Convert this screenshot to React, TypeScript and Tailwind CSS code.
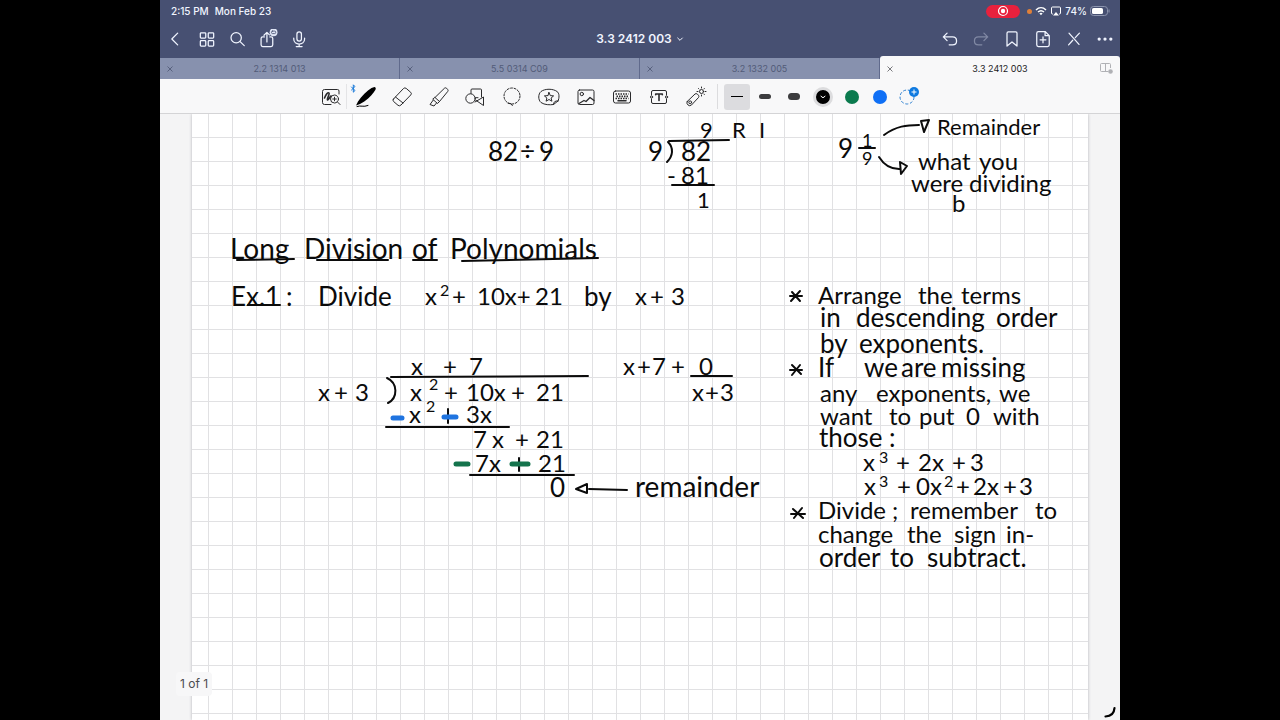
import type { ReactNode } from 'react';

type Word = [number, string];
type Line = { y: number; size: number; words: Word[] };

const INK = '#0b0b0b';

const tabs = [
  { title: '2.2 1314 013', active: false },
  { title: '5.5 0314 C09', active: false },
  { title: '3.2 1332 005', active: false },
  { title: '3.3 2412 003', active: true },
];

// Baseline, size and the start of every word on the sheet
const lines: Line[] = [
  { y: 47, size: 26, words: [[296, '82'], [328, '÷'], [347, '9']] },
  { y: 24, size: 22, words: [[508, '9'], [540, 'R'], [567, 'I']] },
  { y: 47, size: 26, words: [[456, '9'], [489, '82']] },
  { y: 70, size: 24, words: [[475, '-'], [489, '81']] },
  { y: 94, size: 22, words: [[505, '1']] },
  { y: 44, size: 26, words: [[646, '9']] },
  { y: 33, size: 18, words: [[670, '1']] },
  { y: 51, size: 18, words: [[670, '9']] },
  { y: 21, size: 22, words: [[745, 'Remainder']] },
  { y: 56, size: 24, words: [[726, 'what'], [787, 'you']] },
  { y: 78, size: 24, words: [[719, 'were'], [777, 'dividing']] },
  { y: 98, size: 24, words: [[760, 'b']] },

  { y: 145, size: 28, words: [[38, 'Long'], [112, 'Division'], [220, 'of'], [258, 'Polynomials']] },
  {
    y: 192,
    size: 26,
    words: [[39, 'Ex.1'], [94, ':'], [126, 'Divide'], [392, 'by']],
  },
  {
    y: 191,
    size: 24,
    words: [[233, 'x'], [260, '+'], [285, '10x+'], [343, '21'], [443, 'x'], [458, '+'], [479, '3']],
  },
  { y: 182, size: 16, words: [[248, '2']] },

  { y: 261, size: 24, words: [[219, 'x'], [251, '+'], [277, '7'], [431, 'x'], [445, '+'], [460, '7'], [479, '+'], [507, '0']] },
  {
    y: 287,
    size: 24,
    words: [
      [126, 'x'], [142, '+'], [163, '3'], [218, 'x'], [252, '+'], [274, '10x'],
      [319, '+'], [344, '21'], [500, 'x'], [513, '+'], [528, '3'],
    ],
  },
  { y: 276, size: 16, words: [[237, '2']] },
  { y: 309, size: 24, words: [[217, 'x'], [274, '3x']] },
  { y: 298, size: 16, words: [[234, '2']] },
  { y: 334, size: 24, words: [[281, '7'], [300, 'x'], [323, '+'], [344, '21']] },
  { y: 358, size: 24, words: [[283, '7x'], [346, '21']] },
  { y: 383, size: 26, words: [[358, '0']] },
  { y: 383, size: 28, words: [[443, 'remainder']] },

  { y: 190, size: 24, words: [[626, 'Arrange'], [726, 'the'], [769, 'terms']] },
  { y: 213, size: 26, words: [[628, 'in'], [664, 'descending'], [804, 'order']] },
  { y: 239, size: 26, words: [[628, 'by'], [667, 'exponents.']] },
  { y: 263, size: 26, words: [[626, 'If'], [672, 'we'], [709, 'are'], [749, 'missing']] },
  { y: 288, size: 24, words: [[628, 'any'], [684, 'exponents,'], [807, 'we']] },
  { y: 311, size: 24, words: [[628, 'want'], [697, 'to'], [727, 'put'], [774, '0'], [801, 'with']] },
  { y: 333, size: 26, words: [[627, 'those'], [697, ':']] },
  { y: 357, size: 24, words: [[671, 'x'], [704, '+'], [726, '2x'], [760, '+'], [778, '3']] },
  { y: 349, size: 16, words: [[687, '3']] },
  {
    y: 381,
    size: 24,
    words: [[672, 'x'], [705, '+'], [724, '0x'], [764, '+'], [781, '2x'], [811, '+'], [827, '3']],
  },
  { y: 373, size: 16, words: [[687, '3'], [752, '2']] },
  { y: 405, size: 24, words: [[626, 'Divide'], [700, ';'], [718, 'remember'], [843, 'to']] },
  { y: 429, size: 24, words: [[626, 'change'], [715, 'the'], [762, 'sign'], [814, 'in-']] },
  { y: 453, size: 26, words: [[627, 'order'], [698, 'to'], [735, 'subtract.']] },
];

function Sheet() {
  return (
    <svg className="absolute inset-0 h-full w-full" role="img" aria-label="Long division of polynomials">
      <g fill={INK} fontFamily="Lato, 'Open Sans', sans-serif">
        {lines.map((line) => (
          <text key={`${line.y}-${line.words[0][0]}`} y={line.y} fontSize={line.size}>
            {line.words.map(([x, word]) => (
              <tspan key={x} x={x}>{word}</tspan>
            ))}
          </text>
        ))}
      </g>

      <g fill="none" stroke={INK} strokeWidth="2" strokeLinecap="round" strokeLinejoin="round">
        {/* 82 divided by 9 */}
        <path d="M477 27 L537 26" />
        <path d="M476 28 C482 34 481 42 475 48" />
        <path d="M480 71 H522" />
        <path d="M667 34 H683" />
        <path d="M692 21 C704 12 715 11 727 11 M729 7 L737 6 L732 18 Z" />
        <path d="M687 43 C692 51 699 55 707 55 M708 48 L715 52 L709 60 Z" />

        {/* heading underlines */}
        <path d="M45 146 L102 145 M125 146 L196 146 M221 146 H245 M270 147 L406 144" />
        <path d="M56 191 H88" />

        {/* polynomial division */}
        <path d="M199 263 L396 262" />
        <path d="M195 264 C206 269 206 284 196 289" />
        <path d="M194 313 L317 313" />
        <path d="M278 361 L382 361" />
        <path d="M499 262 H540" />
        <path d="M384 375 L395 370 L395 379 Z M397 375 L435 376" />

        {/* bullets */}
        <path d="M598 182 H610 M600 178 L608 187 M608 177 L599 187" />
        <path d="M598 256 H610 M600 251 L609 260 M608 251 L600 261" />
        <path d="M599 400 H613 M601 395 L611 404 M610 394 L602 404" />

        <path d="M256 295 V309 M327 344 V357" />
      </g>

      <g strokeWidth="5" strokeLinecap="round">
        <path d="M201 304 H210 M252 303 H264" stroke="#1f74e0" />
        <path d="M264 350 H276 M320 350 H336" stroke="#14734c" />
      </g>
    </svg>
  );
}

function Icon({ children, className }: { children: ReactNode; className: string }) {
  return (
    <svg
      viewBox="0 0 24 24"
      className={className}
      fill="none"
      stroke="currentColor"
      strokeWidth="1.5"
      strokeLinecap="round"
      strokeLinejoin="round"
      aria-hidden="true"
    >
      {children}
    </svg>
  );
}

function NavButton({ label, children }: { label: string; children: ReactNode }) {
  return (
    <button aria-label={label} className="flex h-[34px] w-[31px] items-center justify-center">
      <Icon className="h-5 w-5">{children}</Icon>
    </button>
  );
}

function Tool({ label, children }: { label: string; children: ReactNode }) {
  return (
    <button aria-label={label} className="flex flex-1 items-center justify-center">
      <svg
        viewBox="0 0 24 24"
        className="h-6 w-6 overflow-visible"
        fill="none"
        stroke="currentColor"
        strokeWidth="1"
        strokeLinecap="round"
        strokeLinejoin="round"
        aria-hidden="true"
      >
        {children}
      </svg>
    </button>
  );
}

function StatusBar() {
  return (
    <div className="flex h-[22px] items-center justify-between pr-[10px] pl-[11px] text-[10px] font-medium">
      <div className="flex gap-1.5">
        <span>2:15 PM</span>
        <span>Mon Feb 23</span>
      </div>
      <div className="flex items-center gap-[3px]">
        <button aria-label="Stop recording" className="mr-1 flex h-[13px] w-[34px] items-center justify-center rounded-full bg-[#e8213d]">
          <svg viewBox="0 0 12 12" className="h-3 w-3" aria-hidden="true">
            <circle cx="6" cy="6" r="4.5" fill="none" stroke="white" strokeWidth="1.2" />
            <circle cx="6" cy="6" r="2.2" fill="white" />
          </svg>
        </button>
        <span className="h-[5px] w-[5px] rounded-full bg-[#e08038]" />
        <svg viewBox="0 0 12 10" className="h-[10px] w-3" aria-hidden="true">
          <path d="M1 4 C4 1 8 1 11 4 M3 6 C4.8 4.4 7.2 4.4 9 6" fill="none" stroke="white" strokeWidth="1.5" />
          <path d="M4.4 7.4 Q6 6.2 7.6 7.4 L6 9.2 Z" fill="white" />
        </svg>
        <svg viewBox="0 0 12 10" className="h-[10px] w-3" aria-hidden="true">
          <path d="M3 8 H2.4 Q1.5 8 1.5 7 V2 Q1.5 1 2.5 1 H9.5 Q10.5 1 10.5 2 V7 Q10.5 8 9.6 8 H9" fill="none" stroke="white" />
          <path d="M6 6 L9 9.6 H3 Z" fill="white" />
        </svg>
        <span>74%</span>
        <svg viewBox="0 0 20 10" className="h-[10px] w-5" aria-hidden="true">
          <rect x="0.5" y="0.5" width="17" height="9" rx="3" fill="none" stroke="#8c94ae" />
          <rect x="2" y="2" width="11" height="6" rx="1.6" fill="white" />
          <path d="M19 3.5 V6.5" stroke="#8c94ae" />
        </svg>
      </div>
    </div>
  );
}

function NavBar() {
  return (
    <nav className="grid h-[34px] grid-cols-[1fr_auto_1fr] items-center">
      <div className="flex">
        <NavButton label="Back"><path d="M14 5 L7 12 L14 19" /></NavButton>
        <NavButton label="Library">
          <rect x="4" y="4.5" width="6.500" height="6.500" rx="1" />
          <rect x="13.500" y="4.500" width="6.500" height="6.500" rx="1" />
          <rect x="4" y="14" width="6.500" height="6.500" rx="1" />
          <rect x="13.500" y="14" width="6.500" height="6.500" rx="1" />
        </NavButton>
        <NavButton label="Search">
          <circle cx="9.800" cy="10.500" r="6.200" />
          <path d="M14.500 15.200 L19.500 20" />
        </NavButton>
        <NavButton label="Share">
          <path d="M6.500 9.500 H4.500 Q2.500 9.500 2.500 11.500 V19 Q2.500 21 4.500 21 H14.500 Q16.500 21 16.500 19 V11.500 Q16.500 9.500 14.500 9.500 H13 M9.500 15.500 V4.500 M6 7.500 L9.500 4 L12.500 7" />
          <circle cx="17.500" cy="4" r="4.700" fill="#dfe5f5" stroke="none" />
          <rect x="15" y="2.500" width="5" height="3" rx="1.200" stroke="#475072" strokeWidth="1" />
        </NavButton>
        <NavButton label="Record audio">
          <rect x="8.300" y="3.500" width="5.400" height="11" rx="2.700" />
          <path d="M4.500 11 V12 C4.500 20 17.500 20 17.500 12 V11 M11 18 V21 M7.500 21 H14.500" />
        </NavButton>
      </div>

      <button className="flex items-center gap-1 text-xs font-semibold">
        3.3 2412 003
        <Icon className="h-2 w-2"><path d="M5 9 L12 16 L19 9" strokeWidth="3" /></Icon>
      </button>

      <div className="flex justify-end">
        <NavButton label="Undo"><path d="M8.5 5 L4 9.5 L8.5 14 M4 9.5 H15 C21.5 9.5 21.5 19 15 19 H11" /></NavButton>
        <button aria-label="Redo" className="flex h-[34px] w-[31px] items-center justify-center text-[#8189a4]">
          <Icon className="h-5 w-5">
            <path d="M15.5 5 L20 9.5 L15.5 14 M20 9.5 H9 C2.5 9.5 2.5 19 9 19 H13" />
          </Icon>
        </button>
        <NavButton label="Bookmark"><path d="M6 5 Q6 3.5 7.5 3.5 H16.5 Q18 3.5 18 5 V20.5 L12 15.5 L6 20.5 Z" /></NavButton>
        <NavButton label="Add page">
          <path d="M14.5 3 H6.5 Q4.5 3 4.5 5 V19 Q4.5 21 6.5 21 H17.5 Q19.5 21 19.5 19 V8 Z M14.5 3 V8 H19.5 M12 9.5 V16.5 M8.5 13 H15.5" />
        </NavButton>
        <NavButton label="Close editing">
          <path d="M6 5 L18 18.500 M18.500 5 L13.500 10.300 M10.500 13.500 L5.500 19" />
        </NavButton>
        <NavButton label="More">
          <circle cx="5" cy="12" r="1.2" fill="currentColor" />
          <circle cx="12" cy="12" r="1.2" fill="currentColor" />
          <circle cx="19" cy="12" r="1.2" fill="currentColor" />
        </NavButton>
      </div>
    </nav>
  );
}

function TabStrip() {
  return (
    <div className="grid h-[23px] grid-cols-4 items-end text-[9px]">
      {tabs.map((tab) => (
        <div
          key={tab.title}
          className={
            tab.active
              ? 'grid h-full grid-cols-[20px_1fr_20px] items-center rounded-t-[3px] bg-[#f8f8f9] pt-0.5 text-[#1c1c1e]'
              : 'grid h-[21px] grid-cols-[20px_1fr_20px] items-center border-r border-[#606a8c] bg-[#8791ae] text-[#525b78]'
          }
        >
          <button aria-label={`Close ${tab.title}`} className="flex justify-center">
            <svg viewBox="0 0 6 6" className="h-[6px] w-[6px]" aria-hidden="true">
              <path d="M0.5 0.5 L5.5 5.5 M5.5 0.5 L0.5 5.5" stroke={tab.active ? '#6a6a6e' : '#525b78'} strokeWidth="0.9" />
            </svg>
          </button>
          <button className="text-center">{tab.title}</button>
          {tab.active && (
            <button aria-label="Split view" className="text-[#b0b1b5]">
              <svg viewBox="0 0 13 11" className="h-[11px] w-[13px]" fill="none" stroke="currentColor" aria-hidden="true">
                <path d="M8 8.5 H1.5 Q0.5 8.5 0.5 7.5 V1.5 Q0.5 0.5 1.5 0.5 H9.5 Q10.5 0.5 10.5 1.5 V5 M5.5 0.5 V8.5" />
                <circle cx="10.5" cy="8.5" r="2.3" fill="currentColor" stroke="none" />
              </svg>
            </button>
          )}
        </div>
      ))}
    </div>
  );
}

function Toolbar() {
  return (
    <div className="flex h-[35px] items-stretch border-b border-[#d4d4d6] bg-[#f8f8f9] pt-px pl-[155px] text-[#2a2a2c]">
      <div className="my-1 flex w-8 border-r border-[#e4e4e6]">
        <Tool label="Zoom window">
          <path d="M12 19.5 H5.5 Q3.5 19.5 3.5 17.5 V6.5 Q3.5 4.5 5.5 4.5 H18.5 Q20 4.5 20 6 V9" />
          <path d="M5.5 13 C7 9 9 7 10 8 C11 9 7.5 14 8.5 15 C9.5 15.5 10.5 12 12 11" strokeWidth="1.6" />
          <circle cx="15.5" cy="14" r="4" />
          <path d="M18.5 17 L21 19.5 M15.5 12.2 V15.8 M13.7 14 H17.3" />
        </Tool>
      </div>

      <div className="flex w-[367px]">
        <Tool label="Pen">
          <path d="M21.500 2 C23.500 2.500 23 4.500 21 7 C18 11 13 16 7 19 L3 20.500 L5 16.500 C8.500 11 14 6 18.500 3 Z" fill="#000" stroke="none" />
          <path d="M4 21.500 C8 20 10 22.500 15 20.500" stroke="#000" />
          <path d="M-1.500 2 L2 5.500 L0.300 7.200 V-0.200 L2 1.500 L-1.500 5" stroke="#1a7ad9" />
        </Tool>
        <Tool label="Eraser">
          <path d="M3.500 14 L13.500 3.500 Q14.800 2.300 16.200 3.400 L20.700 7.300 Q22 8.500 20.800 9.900 L11 20 Q9.500 21.500 8 20.300 L3.600 16.500 Q2.300 15.300 3.500 14 Z M5.500 12 L13 18" />
        </Tool>
        <Tool label="Highlighter">
          <path d="M8 12.500 L17.500 3.200 Q18.500 2.400 19.500 3.200 L20.700 4.500 Q21.500 5.500 20.700 6.500 L12.500 16.500 M8 12.500 L12.500 16.500 L10.500 18.500 L6 14.500 Z M6.300 15 L3 19.500 L7 21 L9.500 18" />
        </Tool>
        <Tool label="Shapes">
          <circle cx="7.500" cy="13.500" r="4.700" />
          <path d="M8 8.500 V5 Q8 4 9 4 H17.500 Q18.500 4 18.500 5 V12 M12.500 12.700 H15 M12.500 15 L20.500 20.500 V12 L12 17" />
        </Tool>
        <Tool label="Lasso">
          <circle cx="12" cy="11" r="8" strokeDasharray="2 1.600" />
          <path d="M8 18 Q12 18 12.500 20.500" />
        </Tool>
        <Tool label="Stickers">
          <path d="M21 16 C22.500 13 22.500 8 20 6.500 C16 3.500 8 3.500 4 6.500 C1 9 1 15 4 17.500 C7.500 20 13 20 16.500 19.500 L21 16 M16.500 19.500 C16.500 17 18 15.500 21 16" />
          <path d="M12 7.500 L13.300 10.600 L16.600 10.900 L14.100 13 L14.900 16.200 L12 14.500 L9.100 16.200 L9.900 13 L7.400 10.900 L10.700 10.600 Z" />
        </Tool>
        <Tool label="Image">
          <rect x="4" y="5" width="16" height="14.500" rx="1.500" />
          <circle cx="7.800" cy="9" r="1.700" />
          <path d="M5 18.500 L10 15.500 L12 16.500 L16 12.500 L20 15.500" strokeWidth="1.300" />
        </Tool>
        <Tool label="Keyboard">
          <rect x="3.500" y="6" width="17" height="12" rx="2" />
          <path d="M5.500 9 H18.500 M6.500 11.300 H18.500 M5.500 13.500 H18.500" strokeWidth="1.700" strokeDasharray="1.500 1" strokeLinecap="butt" />
          <path d="M8 15.800 H16" strokeWidth="1.500" />
        </Tool>
        <Tool label="Text">
          <path d="M4.500 10 V7 Q4.500 5.500 6 5.500 H18 Q19.500 5.500 19.500 7 V10 M4.500 14 V17 Q4.500 18.500 6 18.500 H18 Q19.500 18.500 19.500 17 V14" />
          <circle cx="4.500" cy="12" r="1.100" />
          <circle cx="19.500" cy="12" r="1.100" />
          <path d="M8.700 9.800 V9 H15.300 V9.800 M12 9 V15.500" strokeWidth="1.600" />
        </Tool>
        <Tool label="Laser pointer">
          <path d="M3.200 16.500 L11 9 Q12 8 13.500 9.200 L14.500 10.300 Q15.300 11.500 14.500 12.500 L7.500 20 Q5.700 21.500 4 20 Q2 18.300 3.200 16.500 Z" />
          <circle cx="6.200" cy="17.300" r="1.400" />
          <circle cx="17.500" cy="6.500" r="2" />
          <path d="M17.500 2 V3 M17.500 10 V11 M13 6.500 H14 M21 6.500 H22 M14.500 3.500 L15 4 M20.300 3.500 L20 4 M20.300 9.500 L20 9" />
        </Tool>
      </div>

      <div className="my-1 w-1 border-r border-[#dcdcde]" />

      <div className="flex items-center pl-[6px]">
        <button aria-label="Thin stroke" className="flex h-[26px] w-[26px] items-center justify-center rounded-[3px] bg-[#dcdcdf]">
          <span className="h-px w-3 bg-black" />
        </button>
        <button aria-label="Medium stroke" className="flex h-7 w-[30px] items-center justify-center">
          <span className="h-[5px] w-3 rounded-full bg-[#3c3c3e]" />
        </button>
        <button aria-label="Thick stroke" className="flex h-7 w-7 items-center justify-center">
          <span className="h-[7px] w-3 rounded-full bg-[#3c3c3e]" />
        </button>
        <button aria-label="Black" className="flex h-7 w-[30px] items-center justify-center">
          <span className="flex h-5 w-5 items-center justify-center rounded-full border-[3px] border-[#dcdcde] bg-black text-white">
            <Icon className="h-[6px] w-[6px]"><path d="M4 9 L12 15 L20 9" strokeWidth="4" /></Icon>
          </span>
        </button>
        <button aria-label="Green" className="flex h-7 w-7 items-center justify-center">
          <span className="h-[14px] w-[14px] rounded-full bg-[#0b7a4e]" />
        </button>
        <button aria-label="Blue" className="flex h-7 w-7 items-center justify-center">
          <span className="h-[14px] w-[14px] rounded-full bg-[#0f6ff5]" />
        </button>
        <button aria-label="Add colour" className="flex h-7 w-[30px] items-center justify-center">
          <svg viewBox="0 0 22 20" className="h-5 w-[22px]" fill="none" aria-hidden="true">
            <circle cx="9" cy="10" r="7" stroke="#2b7fd0" strokeDasharray="3 1.800" />
            <circle cx="16" cy="5" r="5" fill="#0f7ae0" />
            <path d="M16 2.500 V7.500 M13.500 5 H18.500" stroke="white" />
          </svg>
        </button>
      </div>
    </div>
  );
}

export default function App() {
  return (
    <div className="flex h-screen justify-center bg-black font-[Inter,'Liberation_Sans',sans-serif]">
      <div className="flex w-3/4 flex-col overflow-hidden bg-[#f4f4f5]">
        <header className="bg-[#475072] text-[#f1f5ff]">
          <StatusBar />
          <NavBar />
          <TabStrip />
        </header>
        <Toolbar />

        <main className="relative flex-1 overflow-hidden px-8">
          <div className="relative h-full bg-white bg-[linear-gradient(to_right,#e1e1e3_1px,transparent_1px),linear-gradient(to_bottom,#e1e1e3_1px,transparent_1px)] bg-size-[24px_24px] bg-position-[16px_23px] shadow-[0_0_3px_#b4b4b8]">
            <Sheet />
          </div>
          <div className="absolute bottom-6 left-4 rounded bg-[#f7f7f8] px-1 py-1 text-xs text-[#4c4c4e]">1 of 1</div>
          <svg viewBox="0 0 14 12" className="absolute right-0.5 bottom-0.5 h-3 w-[14px]" aria-hidden="true">
            <path d="M1.500 10.500 Q10 10 10.500 2" fill="none" stroke="black" strokeWidth="2.200" strokeLinecap="round" />
          </svg>
        </main>
      </div>
    </div>
  );
}
